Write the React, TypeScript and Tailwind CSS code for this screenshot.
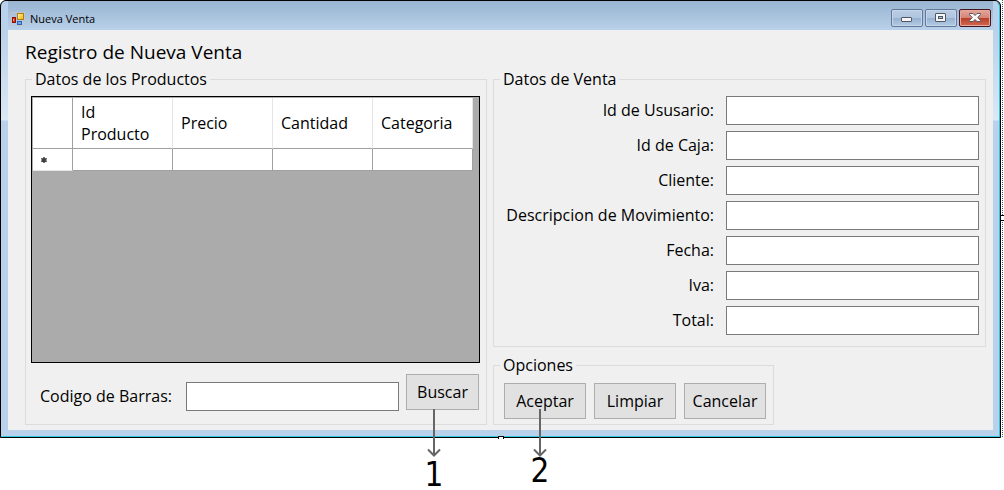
import React from 'react';

const columns = ['Id Producto', 'Precio', 'Cantidad', 'Categoria'];

const saleFields = [
  { id: 'usuario', label: 'Id de Ususario:' },
  { id: 'caja', label: 'Id de Caja:' },
  { id: 'cliente', label: 'Cliente:' },
  { id: 'descripcion', label: 'Descripcion de Movimiento:' },
  { id: 'fecha', label: 'Fecha:' },
  { id: 'iva', label: 'Iva:' },
  { id: 'total', label: 'Total:' },
];

const inputClass =
  'h-[29px] min-w-0 border border-[#7a7a7a] bg-white px-1 outline-none focus:border-[#0078d7]';
const buttonClass =
  'h-9 border border-[#adadad] bg-[#e1e1e1] text-center hover:border-[#0078d7] hover:bg-[#e5f1fb]';

function FormIcon() {
  return (
    <svg width="14" height="14" viewBox="0 0 14 14" shapeRendering="crispEdges" aria-hidden="true">
      <defs>
        <linearGradient id="gold" x1="0" y1="0" x2="1" y2="1">
          <stop offset="0" stopColor="#fff3a0" />
          <stop offset="1" stopColor="#f2b30c" />
        </linearGradient>
      </defs>
      <path d="M.5 .5h13v13h-13z" fill="none" stroke="#c3c6c9" />
      <rect x="1" y="5" width="4" height="6" fill="#8e1208" />
      <rect x="2" y="6" width="2" height="4" fill="#d5361f" />
      <rect x="2" y="7" width="1" height="2" fill="#ff9a80" />
      <rect x="6" y="1" width="7" height="7" fill="#b67d0c" />
      <rect x="7" y="2" width="5" height="5" fill="url(#gold)" />
      <rect x="6" y="9" width="5" height="4" fill="#2c63b8" />
      <rect x="7" y="10" width="3" height="2" fill="#6ea5ec" />
    </svg>
  );
}

function MinimizeIcon() {
  return (
    <svg width="12" height="12" viewBox="0 0 12 12" aria-hidden="true">
      <rect x=".5" y="5.5" width="10" height="4" rx=".5" fill="#f6f6f6" stroke="#535666" />
    </svg>
  );
}

function MaximizeIcon() {
  return (
    <svg width="12" height="12" viewBox="0 0 12 12" aria-hidden="true">
      <rect x=".5" y="1.5" width="10" height="8" rx=".5" fill="#f6f6f6" stroke="#535666" />
      <rect x="3.5" y="4.5" width="4" height="2" fill="#a8c3de" stroke="#535666" />
    </svg>
  );
}

function CloseIcon() {
  return (
    <svg width="12" height="12" viewBox="0 0 12 12" aria-hidden="true">
      <path
        d="M.5 1.5h3.5L6 3.5l2-2h3.5v1.2L8.7 5.5l2.8 2.8v1.2H8L6 7.5l-2 2H.5V8.3l2.8-2.8L.5 2.7z"
        fill="#f8f8f8"
        stroke="#535666"
      />
    </svg>
  );
}

function Arrow() {
  return (
    <svg width="14" height="48" viewBox="0 0 14 48" fill="none" stroke="#666" strokeWidth="2" aria-hidden="true">
      <path d="M7 0V46" />
      <path d="M1 40.5L7 46.5L13 40.5" />
    </svg>
  );
}

function Group({ title, className, children }: { title: string; className: string; children: React.ReactNode }) {
  return (
    <fieldset className={`min-w-0 border border-[#dcdcdc] ${className}`}>
      <legend className="px-[3px] leading-[23px]">{title}</legend>
      {children}
    </fieldset>
  );
}

function TitleBar() {
  const caption = 'flex h-[18px] w-8 items-center justify-center rounded-[2px] border';
  const blue =
    'border-[#64779a] bg-[linear-gradient(#b9cde3_0%,#b0c6df_48%,#95b0cf_50%,#b3cbe5_100%)] shadow-[inset_0_0_0_1px_#c3d6ea]';
  return (
    <header className="flex h-[29px] items-start bg-linear-to-b from-[#98b4d1] to-[#b9d1ea] pr-[2px] pl-[3px]">
      <div className="flex flex-1 items-center gap-[5px] pt-[10px] leading-4">
        <FormIcon />
        <span className="text-[11px]">Nueva Venta</span>
      </div>
      <div className="flex gap-[2px] pt-2">
        <button type="button" aria-label="Minimizar" className={`${caption} ${blue}`}>
          <MinimizeIcon />
        </button>
        <button type="button" aria-label="Maximizar" className={`${caption} ${blue}`}>
          <MaximizeIcon />
        </button>
        <button
          type="button"
          aria-label="Cerrar"
          className={`${caption} border-[#431422] bg-[linear-gradient(#e5a59b_0%,#d68577_48%,#b83d29_50%,#d36a50_100%)] shadow-[inset_0_0_0_1px_#e4a79c]`}
        >
          <CloseIcon />
        </button>
      </div>
    </header>
  );
}

function ProductsTable() {
  return (
    <div className="h-[267px] border border-black bg-[#ababab] pt-px pl-px">
      <table className="w-[440px] table-fixed border-separate border-spacing-0 bg-white text-left">
        <colgroup>
          <col className="w-10" />
          <col className="w-[100px]" />
          <col className="w-[100px]" />
          <col className="w-[100px]" />
          <col className="w-[100px]" />
        </colgroup>
        <thead>
          <tr className="h-[51px]">
            <td className="border-r border-b border-[#a0a0a0]" />
            {columns.map((name) => (
              <th
                key={name}
                scope="col"
                className="border-r border-b border-r-[#e5e5e5] border-b-[#a0a0a0] p-0 pr-4 pl-2 leading-[22px] font-normal"
              >
                {name}
              </th>
            ))}
          </tr>
        </thead>
        <tbody>
          <tr className="h-[22px]">
            <th scope="row" className="border-r border-b border-r-[#a0a0a0] border-b-[#e5e5e5] p-0 pl-2">
              <svg width="6" height="6" viewBox="0 0 6 6" aria-label="Nueva fila">
                <path d="M3 0V6M.3 1.5L5.7 4.5M5.7 1.5L.3 4.5" stroke="#404040" strokeWidth="1.5" />
              </svg>
            </th>
            {columns.map((name) => (
              <td key={name} className="border-r border-b border-[#a0a0a0] p-0" />
            ))}
          </tr>
        </tbody>
      </table>
    </div>
  );
}

export default function App() {
  return (
    <div className="min-h-screen bg-white font-['Open_Sans','Noto_Sans',sans-serif] text-[16px] text-black">
      <div className="relative pr-[3px]">
        <div className="rounded-t-[6px] border border-black bg-black">
          <div className="overflow-hidden rounded-t-[5px] border-r border-b border-[#2bc8e0] bg-[#b9d1ea]">
            <div className="bg-[linear-gradient(#b9d1ea_29px,#dbe8f5_119px,#b9d1ea_120px)] px-[6px] pb-[6px] pl-[7px]">
              <TitleBar />
              <main className="bg-[#f0f0f0] pt-[6px] pr-[7px] pb-[5px] pl-[17px]">
                <h1 className="text-[19px] leading-8">Registro de Nueva Venta</h1>
                <div className="grid grid-cols-[462fr_493fr] gap-x-[6px]">
                  <Group title="Datos de los Productos" className="px-[6px] pt-[5px]">
                    <div className="-ml-px">
                      <ProductsTable />
                    </div>
                    <div className="flex items-start pt-[11px] pr-px pl-2">
                      <label htmlFor="codigo" className="mt-2 leading-[29px]">
                        Codigo de Barras:
                      </label>
                      <input id="codigo" className={`${inputClass} mt-2 ml-[14px] flex-1`} />
                      <button type="button" className={`${buttonClass} ml-[7px] w-[73px]`}>
                        Buscar
                      </button>
                    </div>
                  </Group>

                  <div className="flex flex-col gap-[7px]">
                    <Group title="Datos de Venta" className="px-[6px] pt-[5px] pb-[11px]">
                      <div className="flex flex-col gap-[6px]">
                        {saleFields.map((field) => (
                          <div key={field.id} className="grid grid-cols-[214fr_253fr] gap-3 leading-[29px]">
                            <label htmlFor={field.id} className="text-right whitespace-nowrap">
                              {field.label}
                            </label>
                            <input id={field.id} className={inputClass} />
                          </div>
                        ))}
                      </div>
                    </Group>

                    <Group title="Opciones" className="self-start px-[6px] pt-[6px] pb-[5px]">
                      <div className="flex gap-2 pr-px pl-1">
                        <button type="button" className={`${buttonClass} w-[82px]`}>
                          Aceptar
                        </button>
                        <button type="button" className={`${buttonClass} w-[82px]`}>
                          Limpiar
                        </button>
                        <button type="button" className={`${buttonClass} w-[82px]`}>
                          Cancelar
                        </button>
                      </div>
                    </Group>
                  </div>
                </div>
              </main>
            </div>
          </div>
        </div>

        {/* Designer guide and resize handles */}
        <div className="absolute top-0 right-px bottom-0 w-px bg-[repeating-linear-gradient(#555_0_1px,#fff_1px_2px)]" />
        <div className="absolute top-[215px] right-0 h-[6px] w-1 border-y border-l border-black bg-white" />
        <div className="absolute bottom-[-1px] left-[498px] h-[3px] w-[6px] border-x border-t border-black bg-white" />

        {/* Numbered callouts */}
        <div className="absolute top-[409px] left-[427px] flex w-[14px] flex-col items-center">
          <Arrow />
          <span className="mt-1 font-['DejaVu_Sans_Condensed','DejaVu_Sans',sans-serif] text-[33px] leading-7">1</span>
        </div>
        <div className="absolute top-[409px] left-[533px] flex w-[14px] flex-col items-center">
          <Arrow />
          <span className="font-['DejaVu_Sans_Condensed','DejaVu_Sans',sans-serif] text-[33px] leading-7">2</span>
        </div>
      </div>
    </div>
  );
}
